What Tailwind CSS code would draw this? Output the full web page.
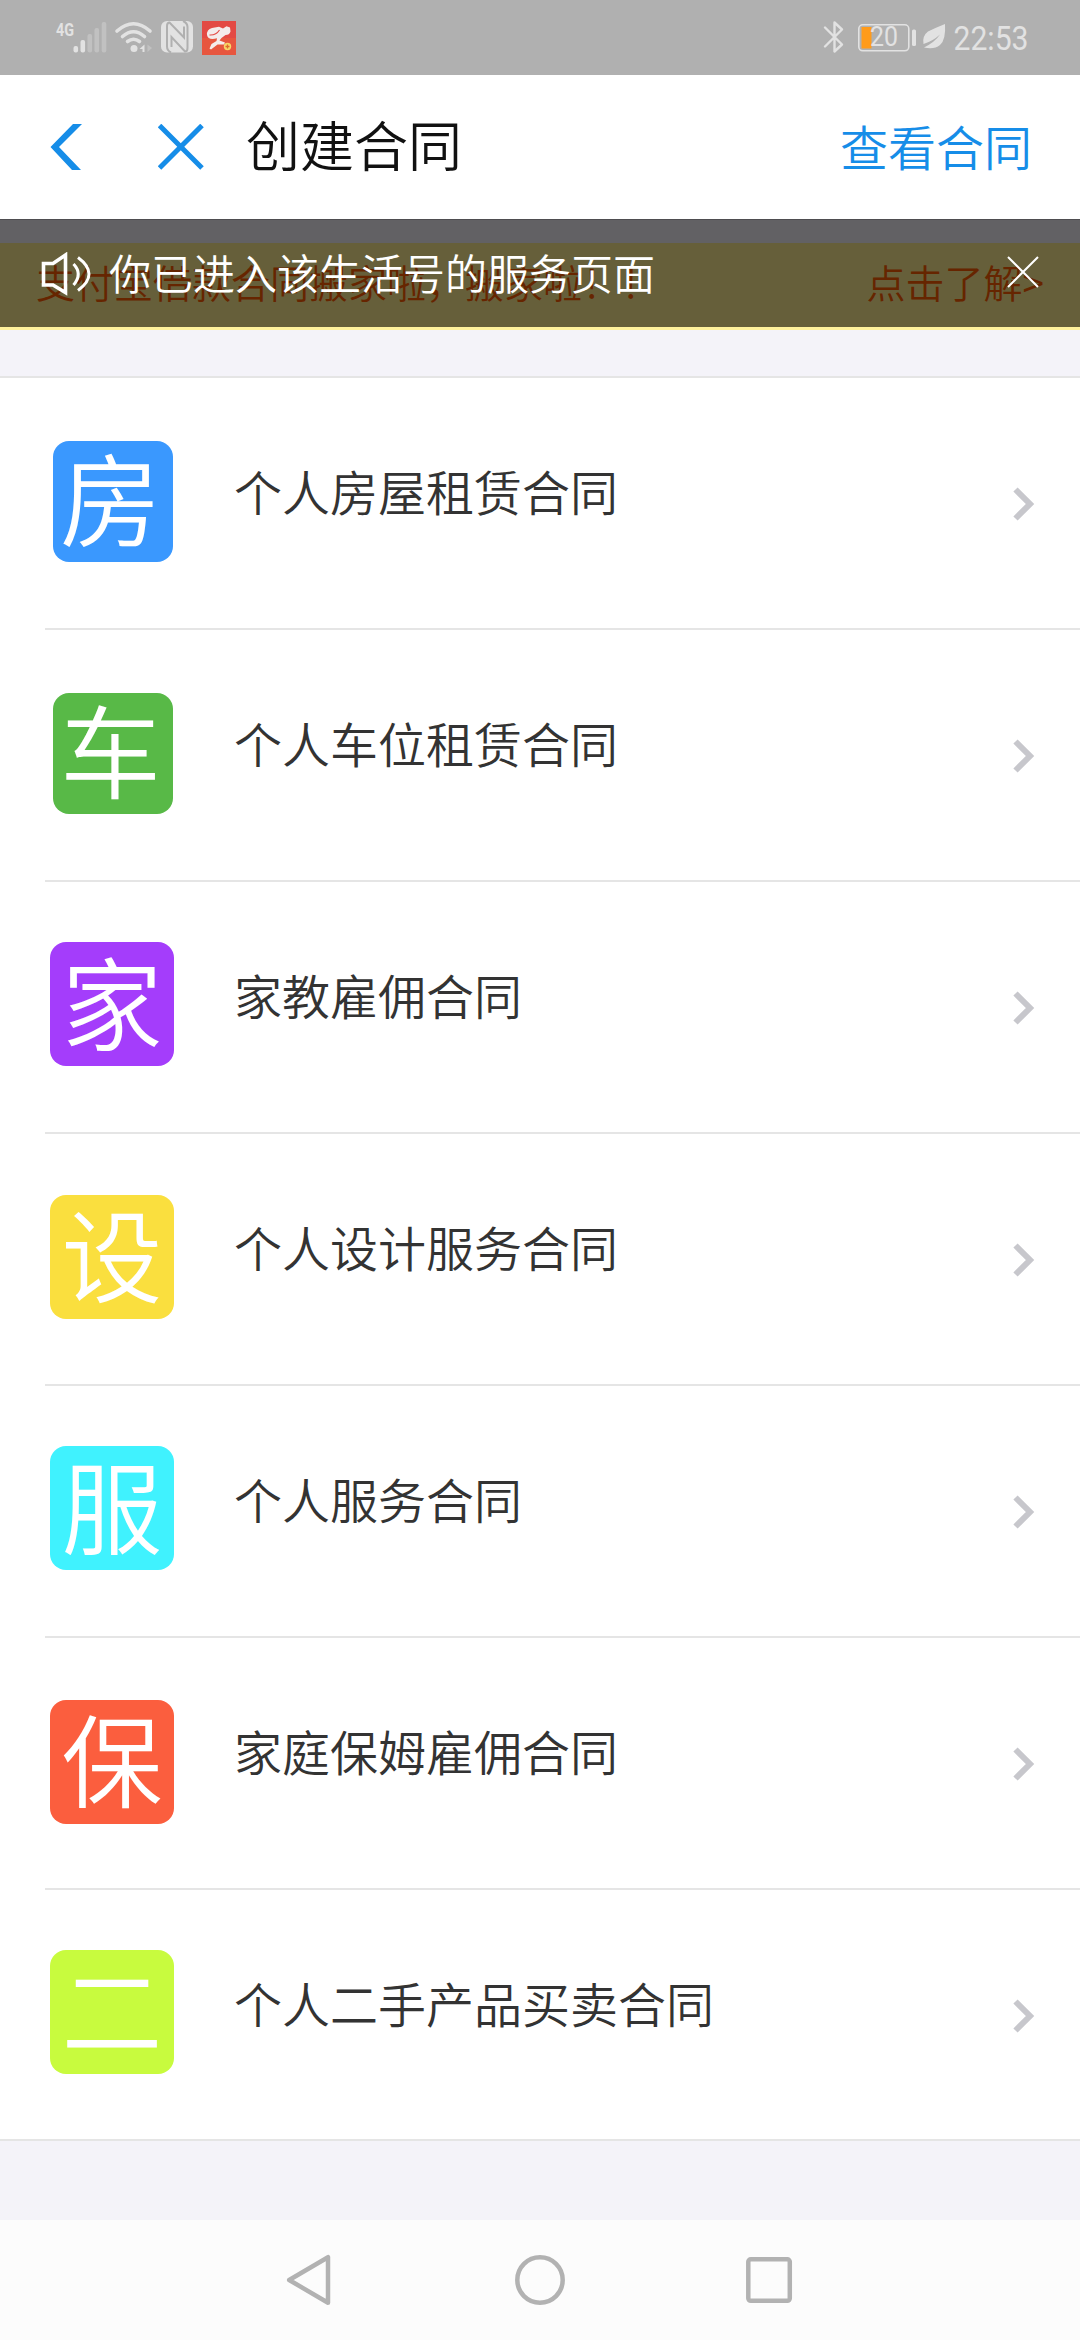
<!DOCTYPE html>
<html lang="zh-CN">
<head>
<meta charset="utf-8">
<title>创建合同</title>
<script src="https://cdn.jsdelivr.net/npm/@tailwindcss/browser@4"></script>
</head>
<body class="w-[1080px] h-[2340px] overflow-hidden flex flex-col bg-[#f4f3f9] font-['Noto_Sans_CJK_SC',sans-serif] font-[350]">

<!-- Status bar -->
<div class="h-[75px] shrink-0 bg-[#b0b0b0] flex justify-between text-[#e2e2e2]">
  <svg class="w-[260px] h-[75px]" viewBox="0 0 260 75" fill="currentColor">
    <text x="56" y="36" font-family="Roboto" font-weight="700" font-size="19" textLength="18" lengthAdjust="spacingAndGlyphs">4G</text>
    <rect x="73.500" y="46" width="4.600" height="6.500" rx="2"/>
    <rect x="80.500" y="40" width="4.600" height="12.500" rx="2"/>
    <g fill="#c1c1c1">
      <rect x="87.500" y="34" width="4.600" height="18.500" rx="2"/>
      <rect x="94.500" y="28" width="4.600" height="24.500" rx="2"/>
      <rect x="101.700" y="22" width="4.600" height="30.500" rx="2"/>
    </g>
    <g fill="none" stroke="currentColor" stroke-width="3.600" stroke-linecap="round">
      <path d="M117 31Q133.500 16.500 150 31"/>
      <path d="M122.500 36.500Q133.500 27 144.500 36.500"/>
      <path d="M127.500 41.500Q133.500 37 139.500 41.500"/>
    </g>
    <circle cx="134" cy="48.500" r="3.500"/>
    <path d="M139.500 49L144.500 44.500V52H142.500V49Z"/>
    <path fill="#c1c1c1" d="M147.500 44.500V52L152 48Z"/>
    <rect x="161" y="21" width="32" height="31.500" rx="6"/>
    <g fill="none" stroke="#b0b0b0" stroke-width="2">
      <path d="M171 52.500Q167 50.500 167 46.500V26Q167 22.500 169.500 22.500L184 37.500V26.500"/>
      <path d="M183 21Q187.500 23 187.500 27V48Q187.500 51.500 185 51.500L171.500 37V47"/>
    </g>
    <rect x="202" y="21" width="34" height="17" fill="#e34a44"/>
    <rect x="202" y="38" width="34" height="17" fill="#e7563f"/>
    <path fill="#f4eceb" d="M207 35Q206.500 29.500 212 28L219 26.800L223 28.500L226.500 26.300L230 27.500L230.500 31.500Q229.500 35 225.500 35L221.500 38L219.500 40.500L225 42.500L224 44.500L217.500 44.500L211 49.500L209.500 48.500L211.500 44L216.500 41L217 38.300Q208 40.500 207 35Z"/>
    <path fill="none" stroke="#e34a44" stroke-width="1.100" d="M209.500 35Q216 35.500 219.500 30"/>
    <circle cx="227.500" cy="46.500" r="3.700" fill="#f7d667"/>
    <path stroke="#dd6a2c" stroke-width="1.300" d="M225.500 46.500H229.500M227.500 44.500V48.500"/>
  </svg>
  <svg class="w-[280px] h-[75px]" viewBox="800 0 280 75" fill="currentColor">
    <path fill="none" stroke="currentColor" stroke-width="2.400" stroke-linejoin="round" stroke-linecap="round" d="M825 27.500L842 44.500L834.500 51.500V22.500L842 29.500L825 46.500"/>
    <rect x="858.800" y="24.800" width="50" height="26" rx="4" fill="none" stroke="currentColor" stroke-width="1.600"/>
    <rect x="861.500" y="27" width="10" height="21.500" fill="#ff9b1a"/>
    <text x="870" y="46" font-family="Roboto" font-weight="400" font-size="27" textLength="28" lengthAdjust="spacingAndGlyphs">20</text>
    <rect x="912" y="29.500" width="4" height="16.500" rx="1.500"/>
    <path d="M945 24Q946 40 940 45Q934 50 924 47.500Q935 42 940 34.500Q933 41 923.500 44Q922 36 928 31.500Q935 28 945 24Z"/>
    <text x="953.500" y="50" font-family="Roboto" font-weight="400" font-size="34" textLength="75" lengthAdjust="spacingAndGlyphs">22:53</text>
  </svg>
</div>

<!-- Title bar -->
<header class="h-[144px] shrink-0 bg-white flex items-center pl-[50px] pr-[48px]">
  <svg class="w-8 h-[46px]" viewBox="0 0 32 46" fill="#168de8"><path d="M23 0H32L9 23L31 46H22L0.500 23Z"/></svg>
  <svg class="w-[46px] h-[46px] ml-[76px]" viewBox="0 0 46 46" stroke="#168de8" stroke-width="5"><path d="M1.500 1.500L44 44M44 1.500L1.500 44"/></svg>
  <h1 class="ml-[42px] pb-[7px] text-[54px] leading-[72px] text-[#111]">创建合同</h1>
  <a class="ml-auto pb-[4px] text-[48px] leading-[72px] text-[#168de8]">查看合同</a>
</header>

<!-- Notice, with the translucent tip lying over it -->
<section class="relative shrink-0 pt-6">
  <div class="h-[87px] bg-[#ffee91] border-b-3 border-[#fff19c] flex justify-between pl-9 pr-9 text-[39px] leading-[77px] text-[#ff5d00]">
    <span>支付宝借款合同搬家啦，搬家啦！！</span>
    <span>点击了解&gt;</span>
  </div>
  <div class="absolute inset-x-0 top-0 h-[108px] bg-black/60 border-t border-black/20 flex items-center justify-between pl-[41px] pr-[41px] text-white">
    <div class="flex items-center">
      <svg class="w-[52px] h-[44px]" viewBox="41 251 52 44" fill="none" stroke="#fff" stroke-width="3.600">
        <path d="M43.500 262.500H53L65.500 254V291.500L53 284H43.500Z"/>
        <path stroke-width="3" d="M73.500 263Q83 273 73.500 284M78 256.500Q100 273 78 289.500"/>
      </svg>
      <span class="ml-[16px] pb-[3px] text-[42px] leading-[60px]">你已进入该生活号的服务页面</span>
    </div>
    <svg class="w-8 h-8 -mt-[3px]" viewBox="0 0 32 32" stroke="#fff" stroke-width="2"><path d="M1 1L31 31M31 1L1 31"/></svg>
  </div>
</section>

<!-- Contract list -->
<ul id="list" class="mt-[46px] h-[1765px] shrink-0 bg-white border-y-2 border-[#e5e5e5]"></ul>

<!-- System navigation -->
<nav class="mt-auto h-[120px] shrink-0 bg-[#fcfcfc] flex justify-center items-center gap-[180px]">
  <svg class="w-[50px] h-[52px]" viewBox="0 0 50 52" fill="none" stroke="#b2b2b2" stroke-width="4.500" stroke-linejoin="round"><path d="M4.200 26L43 3.200V48.800Z"/></svg>
  <svg class="w-[50px] h-[50px]" viewBox="0 0 50 50" fill="none" stroke="#b2b2b2" stroke-width="4.500"><circle cx="25" cy="25" r="22.700"/></svg>
  <svg class="w-[50px] h-[50px]" viewBox="0 0 50 50" fill="none" stroke="#b2b2b2" stroke-width="4.500"><rect x="3.300" y="4.300" width="41.500" height="41.500" rx="2.500"/></svg>
</nav>

<script>
  const items = [
    ['房', '个人房屋租赁合同', 'bg-[#3a98fe] w-[120px] h-[121px] mt-[63px] ml-[53px] mr-[61px] pb-[14px] pr-[5px]'],
    ['车', '个人车位租赁合同', 'bg-[#58b947] w-[120px] h-[121px] mt-[63px] ml-[53px] mr-[61px] pb-[14px] pr-[5px]'],
    ['家', '家教雇佣合同', 'bg-[#a43dfb] w-[124px] h-[124px] mt-[60px] ml-[50px] mr-[60px] pb-[10px]'],
    ['设', '个人设计服务合同', 'bg-[#fadf3e] w-[124px] h-[124px] mt-[61px] ml-[50px] mr-[60px] pb-[12px]'],
    ['服', '个人服务合同', 'bg-[#40f2fe] w-[124px] h-[124px] mt-[60px] ml-[50px] mr-[60px] pb-[10px]'],
    ['保', '家庭保姆雇佣合同', 'bg-[#fb5e3e] w-[124px] h-[124px] mt-[62px] ml-[50px] mr-[60px] pb-[12px]'],
    ['二', '个人二手产品买卖合同', 'bg-[#c8fb3e] w-[124px] h-[124px] mt-[60px] ml-[50px] mr-[60px] pb-[12px]'],
  ];
  document.getElementById('list').innerHTML = items.map(([ch, label, tile], i) => `
    <li class="h-[252px] flex flex-col">
      <div class="flex-1 flex items-start">
        <div class="${tile} shrink-0 rounded-2xl flex items-center justify-center text-white text-[101px] leading-[98px]">${ch}</div>
        <span class="mt-[76px] text-[48px] leading-[72px] text-[#333]">${label}</span>
        <svg class="ml-auto mr-[44px] mt-[108px] w-6 h-9" viewBox="0 0 24 36" fill="none" stroke="#c7c7cc" stroke-width="6"><path d="M3.500 3.500L18 18L3.500 32.500"/></svg>
      </div>
      ${i < items.length - 1 ? '<div class="ml-[45px] h-[2px] bg-[#e5e5e5]"></div>' : ''}
    </li>`).join('');
</script>
</body>
</html>
